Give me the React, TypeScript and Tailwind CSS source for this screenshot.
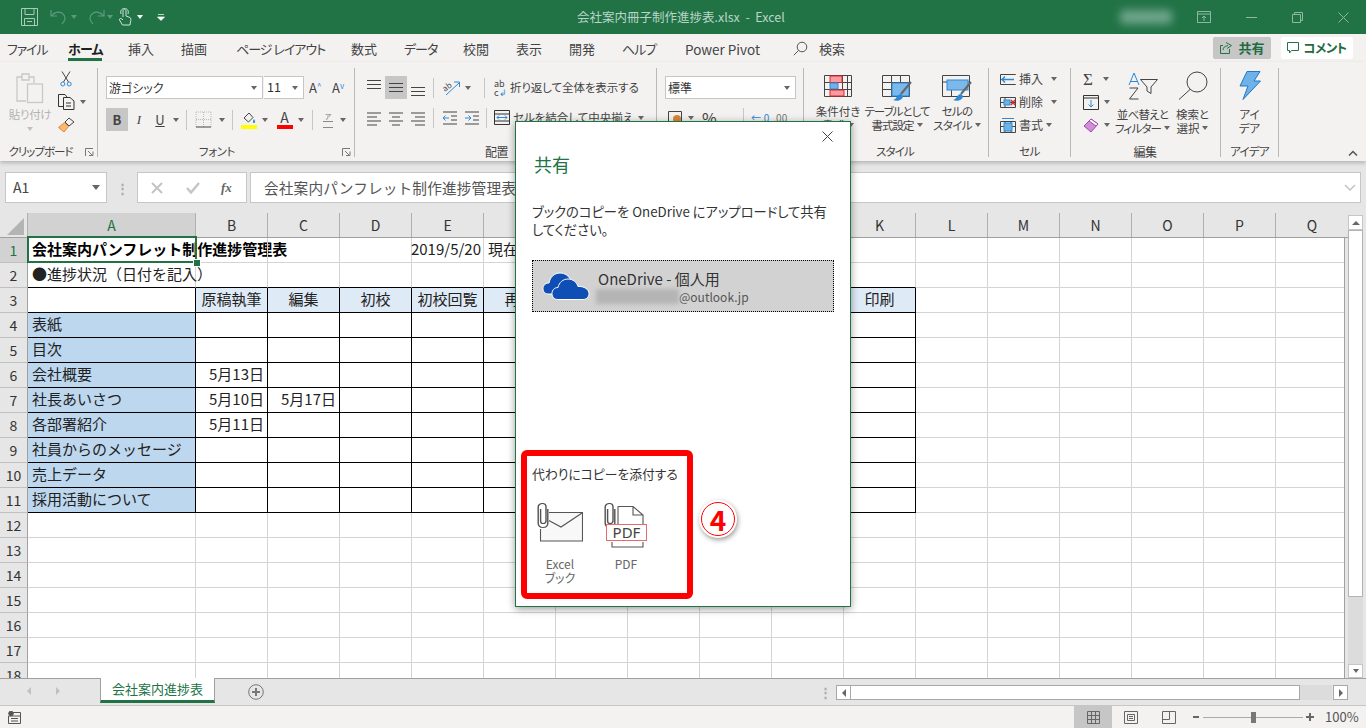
import React from "react";
import clsx from "clsx";

const COLS = ["A", "B", "C", "D", "E", "F", "G", "H", "I", "J", "K", "L", "M", "N", "O", "P", "Q"];
const ROWS = Array.from({ length: 18 }, (_, i) => i + 1);

const CELLS: Record<string, string> = {
  A1: "会社案内パンフレット制作進捗管理表",
  E1: "2019/5/20",
  F1: "現在",
  A2: "●進捗状況（日付を記入）",
  B3: "原稿執筆",
  C3: "編集",
  D3: "初校",
  E3: "初校回覧",
  F3: "再校",
  K3: "印刷",
  A4: "表紙",
  A5: "目次",
  A6: "会社概要",
  B6: "5月13日",
  A7: "社長あいさつ",
  B7: "5月10日",
  C7: "5月17日",
  A8: "各部署紹介",
  B8: "5月11日",
  A9: "社員からのメッセージ",
  A10: "売上データ",
  A11: "採用活動について",
};

function Caret({ className }: { className?: string }) {
  return (
    <span
      className={clsx(
        "inline-block w-0 h-0 border-x-[3.5px] border-x-transparent border-t-[4px] border-t-[#666] shrink-0",
        className
      )}
    />
  );
}

function Lines({ widths, color = "#444" }: { widths: number[][]; color?: string }) {
  return (
    <svg width="22" height="16" viewBox="0 0 22 16" className="shrink-0">
      {widths.map((w, i) => (
        <line key={i} x1={w[0]} x2={w[1]} y1={w[2]} y2={w[2]} stroke={color} strokeWidth="1" />
      ))}
    </svg>
  );
}

function Launcher({ className }: { className?: string }) {
  return (
    <svg width="9" height="9" viewBox="0 0 9 9" className={className}>
      <path d="M0.5 8V0.5H8M3 3L7 7M4 7.5H8V3.5" fill="none" stroke="#777" />
    </svg>
  );
}

function Group({
  width,
  label,
  labelClass,
  launcher,
  children,
}: {
  width: string;
  label: string;
  labelClass?: string;
  launcher?: boolean;
  children: React.ReactNode;
}) {
  return (
    <div className={clsx("h-[89px] mt-[6px] border-r border-[#b9b9b9] flex flex-col relative shrink-0", width)}>
      <div className="h-[76px] flex shrink-0">{children}</div>
      <div
        className={clsx(
          "h-[16px] flex items-center justify-center text-[11.5px] tracking-[-0.4px] text-[#444] whitespace-nowrap shrink-0",
          labelClass
        )}
      >
        {label}
      </div>
      {launcher && <Launcher className="absolute right-[3px] bottom-0" />}
    </div>
  );
}

function VSep({ className }: { className?: string }) {
  return <span className={clsx("w-px bg-[#c6c6c6] shrink-0", className)} />;
}

function LargeLabel({
  line1,
  line2,
  caret,
  className,
}: {
  line1: string;
  line2: string;
  caret?: boolean;
  className?: string;
}) {
  return (
    <div className={clsx("text-[11.5px] leading-[14px] text-[#444] text-center whitespace-nowrap mt-[6px]", className)}>
      <div>{line1}</div>
      <div className="flex items-center justify-center gap-[3px]">
        {line2}
        {caret && <Caret />}
      </div>
    </div>
  );
}

function Clip({ x, y }: { x: number; y: number }) {
  return (
    <path
      transform={`translate(${x} ${y}) scale(1.2 1)`}
      d="M9 6V20C9 23 7.5 24.5 5 24.5C2.5 24.5 1 23 1 20V4C1 2 2.5 0.5 4.5 0.5C6.5 0.5 7.5 2 7.5 4V18C7.5 19.5 6.5 20.5 5 20.5C3.5 20.5 3 19.5 3 18V6"
      fill="none"
      stroke="#555"
      strokeWidth="1.2"
    />
  );
}

function TitleBar() {
  return (
    <div className="h-[34px] bg-[#217346] flex items-center shrink-0">
      <div className="w-[577px] flex items-center pl-[21px] shrink-0">
        <svg width="17" height="18" viewBox="0 0 17 18" fill="none" stroke="#a9cdb9">
          <path d="M0.5 0.5H16.5V17.5H0.5ZM4 0.5V6.5H13V0.5M3.5 17.5V10.5H13.5V17.5M6 13.5H11" />
        </svg>
        <svg width="18" height="18" viewBox="0 0 18 18" fill="none" stroke="#5d9a7d" strokeWidth="1.2" className="ml-[12px]">
          <path d="M1 2V8H7M1.5 8C4 4 9 3 12.5 5.5C16 8 16 12 12 16" />
        </svg>
        <Caret className="ml-[3px] !border-t-[#5d9a7d]" />
        <svg width="18" height="18" viewBox="0 0 18 18" fill="none" stroke="#5d9a7d" strokeWidth="1.2" className="ml-[10px]">
          <path d="M17 2V8H11M16.5 8C14 4 9 3 5.5 5.5C2 8 2 12 6 16" />
        </svg>
        <Caret className="ml-[2px] !border-t-[#5d9a7d]" />
        <svg width="14" height="18" viewBox="0 0 14 18" fill="none" stroke="#cfe3d8" className="ml-[5px]">
          <path d="M5 9V3C5 1 8 1 8 3V8L12 9.5C13 10 13 12 12.5 14L12 17H4.5L1.5 12C1 10.5 3 10 4 11L5 12M3 6C2 3 3.5 0.5 6.5 0.5C9.5 0.5 11 3 10 6" />
        </svg>
        <Caret className="ml-[5px] !border-t-white" />
        <svg width="8" height="7" viewBox="0 0 8 7" className="ml-[14px]">
          <path d="M1 0.5H7M0.5 3H7.5L4 6.5Z" fill="#fff" stroke="#fff" strokeWidth="0.7" />
        </svg>
      </div>
      <div className="w-[543px] text-[12.5px] text-[#b9d5c6] whitespace-nowrap shrink-0">
        会社案内冊子制作進捗表.xlsx&nbsp;&nbsp;-&nbsp;&nbsp;Excel
      </div>
      <div className="w-[52px] h-[14px] bg-[#6fa58b] blur-[4px] rounded shrink-0" />
      <div className="flex items-center shrink-0">
        <svg width="14" height="12" viewBox="0 0 14 12" fill="none" stroke="#8fb8a3" className="ml-[25px]">
          <path d="M0.5 0.5H13.5V11.5H0.5ZM0.5 3H13.5M7 10V5M5 7L7 5L9 7" />
        </svg>
        <span className="w-[11px] h-px bg-[#8fb8a3] ml-[35px]" />
        <svg width="11" height="11" viewBox="0 0 11 11" fill="none" stroke="#8fb8a3" className="ml-[35px]">
          <path d="M0.5 2.5H8.5V10.5H0.5ZM2.5 2.5V0.5H10.5V8.5H8.5" />
        </svg>
        <svg width="11" height="11" viewBox="0 0 11 11" fill="none" stroke="#8fb8a3" className="ml-[35px]">
          <path d="M0.5 0.5L10.5 10.5M10.5 0.5L0.5 10.5" />
        </svg>
      </div>
    </div>
  );
}

function TabRow() {
  const tabs = [
    { label: "ファイル", cls: "w-[68px] pl-[7px] tracking-[-1.2px]" },
    { label: "ホーム", cls: "w-[60px] font-bold text-[#1f1f1f] tracking-[-0.8px]", active: true },
    { label: "挿入", cls: "w-[53px]" },
    { label: "描画", cls: "w-[55px]" },
    { label: "ページ レイアウト", cls: "w-[115px] tracking-[-1px]" },
    { label: "数式", cls: "w-[53px]" },
    { label: "データ", cls: "w-[59px] tracking-[-1px]" },
    { label: "校閲", cls: "w-[53px]" },
    { label: "表示", cls: "w-[53px]" },
    { label: "開発", cls: "w-[53px]" },
    { label: "ヘルプ", cls: "w-[63px] tracking-[-1px]" },
    { label: "Power Pivot", cls: "w-[108px] text-[13.5px]" },
  ];
  return (
    <div className="h-[28px] flex items-center shrink-0 text-[13px] text-[#444] relative">
      {tabs.map((t) => (
        <div key={t.label} className={clsx("whitespace-nowrap shrink-0 relative h-[28px] leading-[30px]", t.cls)}>
          {t.label}
          {t.active && <span className="absolute left-0 w-[34px] bottom-[1px] h-[3px] bg-[#217346]" />}
        </div>
      ))}
      <svg width="15" height="15" viewBox="0 0 15 15" fill="none" stroke="#555" className="shrink-0 mt-px">
        <circle cx="9" cy="6" r="4.8" />
        <path d="M5.5 9.5L0.8 14.2" />
      </svg>
      <span className="ml-[11px] whitespace-nowrap mt-px">検索</span>
      <div className="ml-[368px] w-[58px] h-[22px] bg-[#c6c6c6] rounded-[2px] flex items-center justify-center gap-[7px] font-bold text-[#1f6b42] text-[13px] shrink-0">
        <svg width="12" height="12" viewBox="0 0 12 12" fill="none" stroke="#217346">
          <path d="M6 0.5L11.5 3.5L7 6.5M0.5 3.5V11.5H9.5V7M0.5 3.5H3M3 8C3 5.5 5 4 8 3.5" />
        </svg>
        共有
      </div>
      <div className="ml-[10px] w-[72px] h-[22px] bg-white rounded-[2px] flex items-center justify-center gap-[4px] font-bold text-[#1f6b42] text-[12.5px] tracking-[-0.5px] shrink-0">
        <svg width="12" height="12" viewBox="0 0 12 12" fill="none" stroke="#217346">
          <path d="M0.5 0.5H11.5V8.5H4.5L2.5 11V8.5H0.5Z" />
        </svg>
        コメント
      </div>
    </div>
  );
}

function Clipboard() {
  return (
    <Group width="w-[98px]" label="クリップボード" labelClass="pr-[16px] tracking-[-1px]" launcher>
      <div className="w-[56px] ml-[2px] flex flex-col items-center pt-[4px] shrink-0">
        <svg width="28" height="32" viewBox="0 0 28 32" fill="none" stroke="#c8c8c8" strokeWidth="1.3">
          <path d="M10 29H1V5H6V2H13V5H18V11M6 5V8H13V5" />
          <rect x="11.5" y="12" width="15" height="18.5" fill="#f3f2f1" />
        </svg>
        <span className="text-[11.5px] tracking-[-0.3px] text-[#b4b4b4] mt-[2px] leading-[16px] whitespace-nowrap">貼り付け</span>
        <Caret className="mt-[5px] !border-t-[#c0c0c0]" />
      </div>
      <div className="flex flex-col items-start pt-[3px] gap-[7px]">
        <svg width="12" height="16" viewBox="0 0 12 16" fill="none" stroke="#444" className="ml-[2px]">
          <path d="M2 0.5L8.5 11M10 0.5L3.5 11" />
          <circle cx="2.8" cy="13" r="2" stroke="#2d89d6" />
          <circle cx="9.2" cy="13" r="2" stroke="#2d89d6" />
        </svg>
        <div className="flex items-center gap-[5px]">
          <svg width="17" height="16" viewBox="0 0 17 16" fill="none" stroke="#333">
            <path d="M5 12.5H0.5V0.5H7L9 3M5.5 3.5H12L16 7V15.5H5.5ZM8 9H13M8 12H13" />
          </svg>
          <Caret />
        </div>
        <svg width="17" height="16" viewBox="0 0 17 16" fill="none">
          <path d="M11 1L16 5L11 9L7 5Z" stroke="#444" />
          <path d="M6.5 5.5L10.5 9.5L6 15L0.5 10.5Z" fill="#f5b87a" stroke="#e8862e" />
        </svg>
      </div>
    </Group>
  );
}

function FontGroup() {
  return (
    <Group width="w-[257px]" label="フォント" labelClass="pr-[18px]" launcher>
      <div className="pl-[8px] pt-[8px] flex flex-col gap-[9px]">
        <div className="flex items-center h-[23px]">
          <div className="w-[157px] h-[23px] bg-white border border-[#c6c6c6] flex items-center justify-between pl-[2px] pr-[5px] text-[12px] text-[#333]">
            游ゴシック
            <Caret />
          </div>
          <div className="w-[40px] h-[23px] bg-white border border-[#c6c6c6] border-l-0 flex items-center justify-between pl-[3px] pr-[5px] text-[12.5px] text-[#333] ml-px">
            11
            <Caret />
          </div>
          <span className="ml-[5px] text-[13px] text-[#444] w-[23px]">
            A<sup className="text-[8px] text-[#2d89d6]">^</sup>
          </span>
          <span className="text-[13px] text-[#444] w-[23px]">
            A<sup className="text-[8px] text-[#2d89d6]">v</sup>
          </span>
        </div>
        <div className="flex items-center h-[23px] text-[#444]">
          <div className="w-[22px] h-[23px] bg-[#c6c6c6] flex items-center justify-center font-bold text-[13px]">B</div>
          <div className="w-[22px] text-center italic text-[13px] font-['Liberation_Serif',serif]">I</div>
          <div className="w-[20px] text-center underline text-[13px]">U</div>
          <Caret className="ml-[3px]" />
          <VSep className="h-[20px] ml-[7px]" />
          <svg width="17" height="17" viewBox="0 0 17 17" fill="none" stroke="#bbb" className="ml-[8px]">
            <path d="M1 1H16M1 8.5H16M8.5 1V16M1 1V16M16 1V16" strokeDasharray="1 1" />
            <path d="M1 16H16" stroke="#444" />
          </svg>
          <Caret className="ml-[7px]" />
          <VSep className="h-[20px] ml-[7px]" />
          <div className="flex flex-col items-center ml-[7px] w-[17px]">
            <svg width="14" height="13" viewBox="0 0 14 13" fill="none">
              <path d="M2 7L7 2L11 6.5L6.5 11Z" stroke="#444" />
              <path d="M12 8C13.5 10 13.5 12 12 12C10.5 12 10.5 10 12 8Z" fill="#2d89d6" />
            </svg>
            <span className="w-[16px] h-[4px] bg-[#ffff00] mt-[1px]" />
          </div>
          <Caret className="ml-[5px]" />
          <div className="flex flex-col items-center ml-[8px] w-[17px] leading-[13px] text-[14px]">
            A
            <span className="w-[16px] h-[4px] bg-[#ff0000] mt-[1px]" />
          </div>
          <Caret className="ml-[5px]" />
          <VSep className="h-[20px] ml-[8px]" />
          <div className="flex flex-col items-center ml-[10px] w-[10px] text-[7px] leading-[8px] text-[#777]">
            ア
            <span className="w-[10px] h-[7px] border-y border-[#888] mt-px" />
          </div>
          <Caret className="ml-[7px]" />
        </div>
      </div>
    </Group>
  );
}

function AlignGroup() {
  return (
    <Group width="w-[302px]" label="配置" labelClass="pr-[18px] text-[12px]">
      <div className="pl-[8px] pt-[8px] flex flex-col gap-[7px]">
        <div className="flex items-center h-[23px]">
          <div className="w-[22px] h-[23px] flex items-center">
            <Lines widths={[[4, 18, 0.5], [4, 18, 4.5], [4, 18, 8.5]]} />
          </div>
          <div className="w-[22px] h-[23px] bg-[#c6c6c6] flex items-center">
            <Lines widths={[[4, 18, 3.5], [4, 18, 7.5], [4, 18, 11.5]]} />
          </div>
          <div className="w-[22px] h-[23px] flex items-center">
            <Lines widths={[[4, 18, 7.5], [4, 18, 11.5], [4, 18, 15.5]]} />
          </div>
          <VSep className="h-[20px] ml-[4px]" />
          <svg width="18" height="16" viewBox="0 0 18 16" fill="none" className="ml-[9px]">
            <text x="0" y="10" fontSize="8" fill="#444" transform="rotate(-35 4 8)">ab</text>
            <path d="M3 15L16 3M11 2H16.5V7" stroke="#2d89d6" />
          </svg>
          <Caret className="ml-[4px]" />
          <VSep className="h-[20px] ml-[13px]" />
          <div className="ml-[9px] w-[16px] text-[9px] leading-[9px] text-[#444]">
            ab
            <br />c<span className="text-[#2d89d6]">↲</span>
          </div>
          <span className="text-[11.5px] tracking-[-0.1px] text-[#444] whitespace-nowrap">折り返して全体を表示する</span>
        </div>
        <div className="flex items-center h-[23px]">
          <Lines widths={[[4, 18, 3], [4, 14, 7], [4, 18, 11], [4, 14, 15]]} />
          <Lines widths={[[4, 18, 3], [7, 15, 7], [4, 18, 11], [7, 15, 15]]} />
          <Lines widths={[[4, 18, 3], [8, 18, 7], [4, 18, 11], [8, 18, 15]]} />
          <VSep className="h-[20px] ml-[4px]" />
          <svg width="16" height="14" viewBox="0 0 16 14" fill="none" stroke="#444" className="ml-[8px]">
            <path d="M1 1H15M9 5H15M9 9H15M1 13H15" />
            <path d="M7 7H1M3.5 4.5L1 7L3.5 9.5" stroke="#2d89d6" />
          </svg>
          <svg width="16" height="14" viewBox="0 0 16 14" fill="none" stroke="#444" className="ml-[6px]">
            <path d="M1 1H15M9 5H15M9 9H15M1 13H15" />
            <path d="M1 7H7M4.5 4.5L7 7L4.5 9.5" stroke="#2d89d6" />
          </svg>
          <VSep className="h-[20px] ml-[6px]" />
          <svg width="16" height="15" viewBox="0 0 16 15" fill="none" stroke="#333" className="ml-[7px]">
            <path d="M0.5 0.5H15.5V14.5H0.5ZM0.5 4H15.5M0.5 11H15.5" />
            <path d="M3 7.5H13M5 5.5L3 7.5L5 9.5M11 5.5L13 7.5L11 9.5" stroke="#2d89d6" />
          </svg>
          <span className="ml-[3px] text-[11.5px] text-[#444] whitespace-nowrap">セルを結合して中央揃え</span>
          <Caret className="ml-[5px]" />
        </div>
      </div>
    </Group>
  );
}

function NumberGroup() {
  return (
    <Group width="w-[147px]" label="数値">
      <div className="pl-[8px] pt-[8px] flex flex-col gap-[7px]">
        <div className="w-[131px] h-[23px] bg-white border border-[#c6c6c6] flex items-center justify-between pl-[2px] pr-[5px] text-[12px] text-[#333]">
          標準
          <Caret />
        </div>
        <div className="flex items-center h-[23px] text-[#444]">
          <svg width="14" height="14" viewBox="0 0 14 14" fill="none" stroke="#444" className="ml-[3px]">
            <path d="M0.5 0.5H13.5V13.5H0.5Z" />
            <circle cx="9" cy="8" r="4" fill="#d9873a" stroke="none" />
          </svg>
          <Caret className="ml-[6px]" />
          <span className="ml-[8px] text-[16px] leading-none">%</span>
          <span className="ml-[10px] text-[16px] font-bold leading-none">,</span>
          <VSep className="h-[20px] ml-[11px]" />
          <span className="ml-[7px] text-[10px] text-[#2d89d6] whitespace-nowrap">←.0</span>
          <span className="ml-[4px] text-[10px] text-[#777] whitespace-nowrap">.00</span>
        </div>
      </div>
    </Group>
  );
}

function StylesGroup() {
  return (
    <Group width="w-[185px]" label="スタイル" labelClass="pr-[2px] tracking-[-0.8px]">
      <div className="w-[68px] flex flex-col items-center pt-[7px] shrink-0">
        <svg width="28" height="22" viewBox="0 0 28 22" fill="none" stroke="#444">
          <path d="M0.5 0.5H27.5V21.5H0.5ZM0.5 7.5H27.5M0.5 14.5H27.5M6.5 0.5V21.5M18.5 0.5V21.5M23.5 0.5V21.5" />
          <rect x="6" y="1" width="12" height="6.5" fill="#f79ca0" stroke="#e2252b" />
          <rect x="6" y="8" width="8" height="6" fill="#6eb2e8" stroke="#2d89d6" />
          <rect x="6" y="15" width="14" height="6" fill="#f79ca0" stroke="#e2252b" />
        </svg>
        <LargeLabel line1="条件付き" line2="書式" caret className="mt-[7px]" />
      </div>
      <div className="w-[50px] flex flex-col items-center pt-[7px] shrink-0">
        <svg width="30" height="27" viewBox="0 0 30 27" fill="none" stroke="#444">
          <path d="M0.5 0.5H27.5V21.5H0.5ZM0.5 7.5H27.5M0.5 14.5H27.5M9.5 0.5V21.5M18.5 0.5V21.5" />
          <rect x="10" y="8" width="17" height="13" fill="#7cb8ea" stroke="#2d89d6" />
          <path d="M29 7L19 19" stroke="#666" strokeWidth="2" />
          <path d="M19 19C15 19 15 24 11 25C15 27 21 25 21 21Z" fill="#2d89d6" stroke="none" />
        </svg>
        <div className="-mt-[4px]">
          <LargeLabel line1="テーブルとして" line2="書式設定" caret className="tracking-[-1px]" />
        </div>
      </div>
      <div className="w-[70px] flex flex-col items-center pt-[7px] shrink-0">
        <svg width="30" height="27" viewBox="0 0 30 27" fill="none" stroke="#444">
          <path d="M0.5 0.5H27.5V21.5H0.5ZM0.5 7H27.5M9.5 7V21.5" />
          <rect x="5" y="5" width="21" height="10" fill="#7cb8ea" stroke="#2d89d6" />
          <path d="M29 7L19 19" stroke="#666" strokeWidth="2" />
          <path d="M19 19C15 19 15 24 11 25C15 27 21 25 21 21Z" fill="#2d89d6" stroke="none" />
        </svg>
        <div className="-mt-[4px]">
          <LargeLabel line1="セルの" line2="スタイル" caret className="tracking-[-0.6px]" />
        </div>
      </div>
    </Group>
  );
}

function CellsGroup() {
  const items = [
    { label: "挿入", gap: "ml-[7px]" },
    { label: "削除", gap: "ml-[7px]" },
    { label: "書式", gap: "ml-[2px]" },
  ];
  return (
    <Group width="w-[82px]" label="セル">
      <div className="pl-[7px] pt-px flex flex-col gap-[3px]">
        {items.map((it, i) => (
          <div key={it.label} className="flex items-center h-[20px] text-[12px] text-[#444]">
            <svg width="16" height="15" viewBox="0 0 16 15" fill="none" stroke="#444" className="ml-[4px]">
              {i === 0 && (
                <>
                  <path d="M0.5 2.5H15.5V12.5H0.5ZM0.5 7.5H15.5M6 2.5V12.5" />
                  <rect x="5" y="3" width="11" height="9" fill="#f3f2f1" stroke="none" />
                  <path d="M14 7.5H2M5 4.5L2 7.5L5 10.5" stroke="#2d89d6" strokeWidth="1.4" />
                </>
              )}
              {i === 1 && (
                <>
                  <path d="M0.5 2.5H15.5V12.5H0.5ZM0.5 7.5H15.5M5 2.5V12.5" />
                  <rect x="4" y="5" width="6" height="5" fill="#6eb2e8" stroke="#2d89d6" />
                  <path d="M11 5L15 10M15 5L11 10" stroke="#e2252b" strokeWidth="1.4" />
                </>
              )}
              {i === 2 && (
                <>
                  <path d="M0.5 3.5H15.5V14.5H0.5ZM0.5 8.5H15.5M5 3.5V14.5M11 3.5V14.5" />
                  <rect x="4" y="5" width="8" height="8" fill="#6eb2e8" stroke="#2d89d6" />
                  <path d="M2 0.5H14" stroke="#2d89d6" />
                </>
              )}
            </svg>
            <span className="ml-[3px] w-[25px] whitespace-nowrap">{it.label}</span>
            <Caret className={it.gap} />
          </div>
        ))}
      </div>
    </Group>
  );
}

function EditGroup() {
  return (
    <Group width="w-[150px]" label="編集" labelClass="pr-px text-[12px]">
      <div className="pl-[12px] pt-px flex flex-col gap-[3px] w-[44px] shrink-0">
        <div className="flex items-center h-[20px] gap-[7px]">
          <span className="text-[17px] leading-none text-[#444] w-[13px] font-['Liberation_Serif',serif]">Σ</span>
          <Caret />
        </div>
        <div className="flex items-center h-[20px] gap-[5px]">
          <svg width="16" height="15" viewBox="0 0 16 15" fill="none" stroke="#333">
            <path d="M0.5 0.5H15.5V14.5H0.5ZM0.5 3H15.5" />
            <path d="M8 5V12M5.5 9.5L8 12L10.5 9.5" stroke="#2d89d6" />
          </svg>
          <Caret />
        </div>
        <div className="flex items-center h-[20px] gap-[5px]">
          <svg width="16" height="15" viewBox="0 0 16 15" fill="none">
            <path d="M1 8L8 1L15 6L8 14Z" fill="#cf8fd6" stroke="#a347ad" />
            <path d="M6 3L13 8L15 6L8 1Z" fill="#fff" stroke="#a347ad" />
          </svg>
          <Caret />
        </div>
      </div>
      <div className="w-[55px] flex flex-col items-center pt-[3px] shrink-0">
        <div className="h-[29px] flex items-center">
          <svg width="30" height="28" viewBox="0 0 30 28" fill="none" stroke="#444">
            <path d="M1 13L6 1L11 13M2.5 9.5H9.5" stroke="#2d89d6" />
            <path d="M1.5 16H10L1.5 27H10.5" />
            <path d="M12.5 7.5H29.5L23 15V21.5L19 19V15Z" />
          </svg>
        </div>
        <LargeLabel line1="並べ替えと" line2="フィルター" caret className="tracking-[-0.8px] mt-[7px]" />
      </div>
      <div className="w-[45px] flex flex-col items-center pt-[3px] shrink-0">
        <div className="h-[29px] flex items-center">
          <svg width="30" height="29" viewBox="0 0 30 29" fill="none" stroke="#444">
            <circle cx="19" cy="11" r="10" />
            <path d="M12 18.5L1 28.5" />
          </svg>
        </div>
        <LargeLabel line1="検索と" line2="選択" caret className="mt-[7px]" />
      </div>
    </Group>
  );
}

function RibbonBody() {
  return (
    <div className="h-[99px] flex relative shrink-0 shadow-[0_2px_4px_rgba(0,0,0,0.22)] z-10 bg-[#f3f2f1]">
      <Clipboard />
      <FontGroup />
      <AlignGroup />
      <NumberGroup />
      <StylesGroup />
      <CellsGroup />
      <EditGroup />
      <Group width="w-[58px]" label="アイデア" labelClass="tracking-[-0.8px]">
        <div className="w-full flex flex-col items-center pt-[3px]">
          <svg width="22" height="29" viewBox="0 0 22 29">
            <path d="M8 0.5H21L15 10H21.5L4 28.5L9 15H1Z" fill="#6eb2e8" stroke="#1f78c8" />
          </svg>
          <LargeLabel line1="アイ" line2="デア" className="mt-[7px]" />
        </div>
      </Group>
      <svg width="10" height="6" viewBox="0 0 10 6" fill="none" stroke="#555" strokeWidth="1.5" className="ml-[69px] mt-[88px]">
        <path d="M1 5.5L5 1.5L9 5.5" />
      </svg>
    </div>
  );
}

function FormulaBar() {
  return (
    <div className="h-[52px] bg-[#e6e6e6] flex items-start pt-[11px] pl-[5px] shrink-0">
      <div className="w-[102px] h-[31px] bg-white border border-[#c6c6c6] flex items-center justify-between pl-[7px] pr-[6px] text-[14px] text-[#444] shrink-0">
        A1
        <Caret className="!border-x-[4px] !border-t-[5px]" />
      </div>
      <span className="w-[30px] h-[31px] flex items-center justify-center text-[#aaa] text-[13px] font-bold shrink-0">⋮</span>
      <div className="w-[110px] h-[31px] bg-white border border-[#c6c6c6] flex items-center shrink-0">
        <svg width="12" height="12" viewBox="0 0 12 12" fill="none" stroke="#c4c4c4" strokeWidth="2" className="ml-[13px]">
          <path d="M1 1L11 11M11 1L1 11" />
        </svg>
        <svg width="14" height="12" viewBox="0 0 14 12" fill="none" stroke="#c4c4c4" strokeWidth="2.4" className="ml-[23px]">
          <path d="M1 6L5 10.5L13 1" />
        </svg>
        <span className="ml-[21px] text-[13px] italic font-bold text-[#666] font-['Liberation_Serif',serif]">fx</span>
      </div>
      <div className="ml-[3px] w-[1111px] h-[31px] bg-white border border-[#c6c6c6] flex items-center justify-between pl-[13px] pr-[4px] text-[14.67px] text-[#555] tracking-[0.15px] [font-feature-settings:normal] shrink-0">
        会社案内パンフレット制作進捗管理表
        <svg width="12" height="7" viewBox="0 0 12 7" fill="none" stroke="#c4c4c4" strokeWidth="1.5">
          <path d="M1 1L6 6L11 1" />
        </svg>
      </div>
    </div>
  );
}

function Cell({ col, row }: { col: number; row: number }) {
  const id = COLS[col] + row;
  const text = CELLS[id];
  const inTable = col <= 10;
  const darkRight = inTable && row >= 3 && row <= 11;
  const darkBottom = inTable && row >= 2 && row <= 11;
  const isHead = row === 3 && col > 0 && inTable;
  const isLabel = col === 0 && row >= 4 && row <= 11;
  const isDate = text !== undefined && text.endsWith("日");
  return (
    <div
      className={clsx(
        "h-[25px] border-r border-b flex items-center whitespace-nowrap text-[15px] text-[#222] pb-px shrink-0 [font-feature-settings:normal]",
        col === 0 ? "w-[168px]" : "w-[72px]",
        darkRight ? "border-r-black" : "border-r-[#d4d4d4]",
        darkBottom ? "border-b-black" : "border-b-[#d4d4d4]",
        isHead && "bg-[#deeaf6] justify-center",
        isLabel && "bg-[#bdd7ee]",
        isDate && "justify-end pr-[3px]",
        id === "E1" && "justify-end pr-[2px]",
        !isHead && !isDate && id !== "E1" && "pl-[4px]",
        row === 1 && col === 0 && "font-bold text-black"
      )}
    >
      {text}
    </div>
  );
}

function Sheet() {
  return (
    <div className="h-[465px] flex shrink-0 bg-[#e6e6e6]">
      <div className="w-[1348px] h-[465px] relative shrink-0">
        <div className="flex h-[25px] overflow-hidden border-b border-[#a0a0a0]">
          <div className="w-[28px] h-[24px] border-r border-[#b0b0b0] relative shrink-0">
            <span className="absolute right-[3px] bottom-[2px] w-0 h-0 border-l-[17px] border-l-transparent border-b-[17px] border-b-[#b4b4b4]" />
          </div>
          {COLS.map((c, i) => (
            <div
              key={c}
              className={clsx(
                "h-[24px] flex items-center justify-center text-[14px] shrink-0",
                i === COLS.length - 1 ? "border-r-0" : "border-r border-[#b0b0b0]",
                i === 0 ? "w-[168px] bg-[#d2d2d2] text-[#217346]" : "w-[72px] text-[#333]"
              )}
            >
              {c}
            </div>
          ))}
        </div>
        <div className="w-[1345px] h-[440px] overflow-hidden bg-white border-r border-[#a0a0a0]">
          {ROWS.map((r) => (
            <div key={r} className="flex h-[25px]">
              <div
                className={clsx(
                  "w-[28px] h-[25px] border-r border-b border-r-[#a0a0a0] border-b-[#c0c0c0] flex items-center justify-center text-[14px] shrink-0",
                  r === 1 ? "bg-[#d2d2d2] text-[#217346]" : "bg-[#e6e6e6] text-[#333]"
                )}
              >
                {r}
              </div>
              {COLS.map((_, i) => (
                <Cell key={i} col={i} row={r} />
              ))}
            </div>
          ))}
        </div>
        <div className="absolute left-[27px] top-[23px] w-[170px] h-[27px] border-2 border-[#217346] pointer-events-none" />
        <div className="absolute left-[193px] top-[46px] w-[6px] h-[6px] bg-[#217346] border border-white box-content pointer-events-none" />
      </div>
      <div className="w-[18px] flex flex-col items-start shrink-0">
        <div className="w-[15px] h-[15px] mt-[2px] bg-white border border-[#c6c6c6] flex items-center justify-center shrink-0">
          <span className="w-0 h-0 border-x-[4px] border-x-transparent border-b-[4px] border-b-[#666]" />
        </div>
        <div className="w-[15px] h-[367px] bg-white border border-[#b4b4b4] shrink-0" />
        <div className="w-[15px] flex-1 bg-[#dcdcdc]" />
        <div className="w-[15px] h-[14px] bg-white border border-[#c6c6c6] flex items-center justify-center shrink-0">
          <Caret />
        </div>
      </div>
    </div>
  );
}

function SheetTabs() {
  return (
    <div className="h-[28px] bg-[#e6e6e6] border-t border-[#a0a0a0] border-b border-b-[#c6c6c6] flex items-start shrink-0">
      <span className="ml-[27px] mt-[8px] w-0 h-0 border-y-[4px] border-y-transparent border-r-[4px] border-r-[#c0c0c0]" />
      <span className="ml-[25px] mt-[8px] w-0 h-0 border-y-[4px] border-y-transparent border-l-[4px] border-l-[#c0c0c0]" />
      <div className="ml-[40px] w-[115px] h-[25px] -mt-px bg-white border-x border-x-[#a0a0a0] border-b-[3px] border-b-[#217346] flex items-center justify-center text-[13px] text-[#217346] shrink-0">
        会社案内進捗表
      </div>
      <svg width="16" height="16" viewBox="0 0 16 16" fill="none" stroke="#777" className="ml-[33px] mt-[5px]">
        <circle cx="8" cy="8" r="7.3" />
        <path d="M8 4V12M4 8H12" strokeWidth="2" />
      </svg>
      <span className="ml-[555px] mt-[2px] text-[13px] font-bold text-[#aaa] w-[12px] text-center leading-[22px]">⋮</span>
      <div className="ml-[5px] mt-[6px] w-[15px] h-[15px] bg-white border border-[#a8a8a8] flex items-center justify-center">
        <span className="w-0 h-0 border-y-[4px] border-y-transparent border-r-[4px] border-r-[#666]" />
      </div>
      <div className="mt-[6px] w-[449px] h-[15px] bg-white border border-[#a8a8a8] border-l-0" />
      <div className="w-[32px] mt-[6px] h-[15px] bg-[#dcdcdc]" />
      <div className="ml-px mt-[6px] w-[15px] h-[15px] bg-white border border-[#a8a8a8] flex items-center justify-center">
        <span className="w-0 h-0 border-y-[4px] border-y-transparent border-l-[4px] border-l-[#666]" />
      </div>
    </div>
  );
}

function StatusBar() {
  return (
    <div className="h-[22px] flex items-center shrink-0 relative">
      <svg width="13" height="13" viewBox="0 0 13 13" className="ml-[8px]" fill="none" stroke="#555">
        <circle cx="3" cy="2.5" r="2.3" fill="#555" />
        <path d="M5 1.5H12.5V12.5H0.5V5M0.5 5H12.5M3 7.5H10M3 10H10" />
      </svg>
      <div className="ml-[1053px] w-[38px] h-[22px] bg-[#c6c6c6] flex items-center justify-center">
        <svg width="13" height="13" viewBox="0 0 13 13" fill="none" stroke="#666">
          <path d="M0.5 0.5H12.5V12.5H0.5ZM0.5 4.5H12.5M0.5 8.5H12.5M4.5 0.5V12.5M8.5 0.5V12.5" />
        </svg>
      </div>
      <svg width="14" height="13" viewBox="0 0 14 13" fill="none" stroke="#666" className="ml-[12px]">
        <path d="M0.5 0.5H13.5V12.5H0.5ZM3.5 3.5H10.5V9.5H3.5ZM5 5.5H9M5 7.5H9" />
      </svg>
      <svg width="14" height="13" viewBox="0 0 14 13" fill="none" stroke="#666" className="ml-[24px]">
        <path d="M0.5 0.5H13.5V12.5H0.5ZM0.5 8.5H7.5V0.5" />
      </svg>
      <span className="ml-[17px] w-[6px] h-[2px] bg-[#666]" />
      <div className="ml-[4px] w-[100px] h-px bg-[#aaa] relative">
        <span className="absolute left-[48px] -top-[5px] w-[5px] h-[11px] bg-[#777]" />
      </div>
      <svg width="8" height="8" viewBox="0 0 8 8" className="ml-[3px]">
        <path d="M4 0V8M0 4H8" stroke="#666" strokeWidth="2" />
      </svg>
      <span className="ml-[11px] text-[13px] text-[#555] whitespace-nowrap">100%</span>
    </div>
  );
}

function ShareDialog() {
  return (
    <div className="absolute left-[515px] top-[121px] w-[336px] h-[486px] bg-white border border-[#217346] shadow-[0_2px_8px_rgba(0,0,0,0.4)] z-20 flex flex-col">
      <div className="h-[29px] flex items-center justify-end pr-[17px] shrink-0">
        <svg width="11" height="11" viewBox="0 0 11 11" fill="none" stroke="#444">
          <path d="M0.5 0.5L10.5 10.5M10.5 0.5L0.5 10.5" />
        </svg>
      </div>
      <div className="h-[26px] ml-[18px] text-[18px] leading-[26px] text-[#217346] shrink-0">共有</div>
      <p className="mt-[26px] ml-[16px] text-[13.3px] leading-[18px] text-[#333] whitespace-nowrap shrink-0">
        ブックのコピーを OneDrive にアップロードして共有
        <br />
        してください。
      </p>
      <div className="mt-[21px] ml-[16px] w-[302px] h-[52px] bg-[#d2d2d2] border border-dotted border-black flex items-center shrink-0">
        <svg width="48" height="28" viewBox="0 0 48 28" className="ml-[9px] shrink-0">
          <path
            d="M7 22C3 22 1 20 1 16.5C1 13.5 3.5 11 7 11C8 5 12.5 1 18 1C23 1 27 4 28.5 8L31 18L15 22Z"
            fill="#0f4fb5"
            stroke="#fff"
          />
          <path
            d="M16 27.5C12 27.5 10 25 10 21.5C10 18 12.5 15.5 16 15.5C17 10.5 21 7 26 7C31 7 35 10.5 36 14.5C42 14 47 17.5 47 21.5C47 25 44.5 27.5 41 27.5Z"
            fill="#0f4fb5"
            stroke="#fff"
          />
        </svg>
        <div className="ml-[8px] mt-[2px] flex flex-col">
          <div className="text-[15px] leading-[19px] text-[#333] whitespace-nowrap">OneDrive - 個人用</div>
          <div className="flex items-center text-[12px] leading-[17px] text-[#555]">
            <span className="w-[83px] h-[15px] bg-[#b4b4b4] blur-[2px] -ml-[2px]" />
            @outlook.jp
          </div>
        </div>
      </div>
      <div className="mt-[153px] ml-[16px] text-[12.8px] leading-[18px] text-[#333] shrink-0 whitespace-nowrap">
        代わりにコピーを添付する
      </div>
      <div className="mt-[20px] ml-[20px] flex shrink-0">
        <div className="w-[48px] flex flex-col items-center">
          <svg width="46" height="39" viewBox="0 0 46 39" fill="none" stroke="#555">
            <path d="M3.5 9.5H45.5V38H3.5Z" fill="#f8f8f8" strokeWidth="1.1" />
            <path d="M9 16L24 24L45 10" strokeWidth="1.1" />
            <rect x="0" y="0" width="12" height="26" fill="#fff" stroke="none" />
            <Clip x={0} y={0} />
          </svg>
          <div className="mt-[15px] text-[12px] leading-[14px] text-[#666] text-center">
            Excel
            <br />
            ブック
          </div>
        </div>
        <div className="ml-[19px] w-[46px] flex flex-col items-center">
          <svg width="46" height="46" viewBox="0 0 46 46" fill="none" stroke="#555" className="-mb-[7px]">
            <path d="M15 3.5H30L40 12V21M15 3.5V21M30 3.5V12H40" fill="#fff" strokeWidth="1.1" />
            <path d="M9 39V44H40V39" strokeWidth="1.1" />
            <rect x="0" y="0" width="13" height="26" fill="#fff" stroke="none" />
            <Clip x={1} y={0} />
            <rect x="3.5" y="21.5" width="40" height="16" fill="#fff" stroke="#e8686c" />
            <text x="23.5" y="35" textAnchor="middle" fontSize="15" fill="#444" stroke="none" fontFamily="Noto Sans">
              PDF
            </text>
          </svg>
          <div className="mt-[15px] text-[12px] leading-[14px] text-[#666] text-center">PDF</div>
        </div>
      </div>
      <div className="absolute left-[5px] top-[328px] w-[172px] h-[149px] border-[6px] border-[#ff0000] rounded-[6px] pointer-events-none" />
      <div className="absolute left-[183px] top-[378px] w-[38px] h-[38px] rounded-full bg-white shadow-[1px_2px_5px_rgba(0,0,0,0.4)] flex items-center justify-center">
        <div className="w-[34px] h-[34px] rounded-full border border-[#ff0000] flex items-center justify-center text-[28px] font-bold text-[#ff0000] leading-none">
          4
        </div>
      </div>
    </div>
  );
}

export default function App() {
  return (
    <div className="w-[1366px] h-[728px] overflow-hidden relative flex flex-col bg-[#f3f2f1] font-['Noto_Sans_CJK_JP','Noto_Sans',sans-serif] [font-feature-settings:'palt']">
      <TitleBar />
      <TabRow />
      <RibbonBody />
      <FormulaBar />
      <Sheet />
      <SheetTabs />
      <StatusBar />
      <ShareDialog />
    </div>
  );
}
